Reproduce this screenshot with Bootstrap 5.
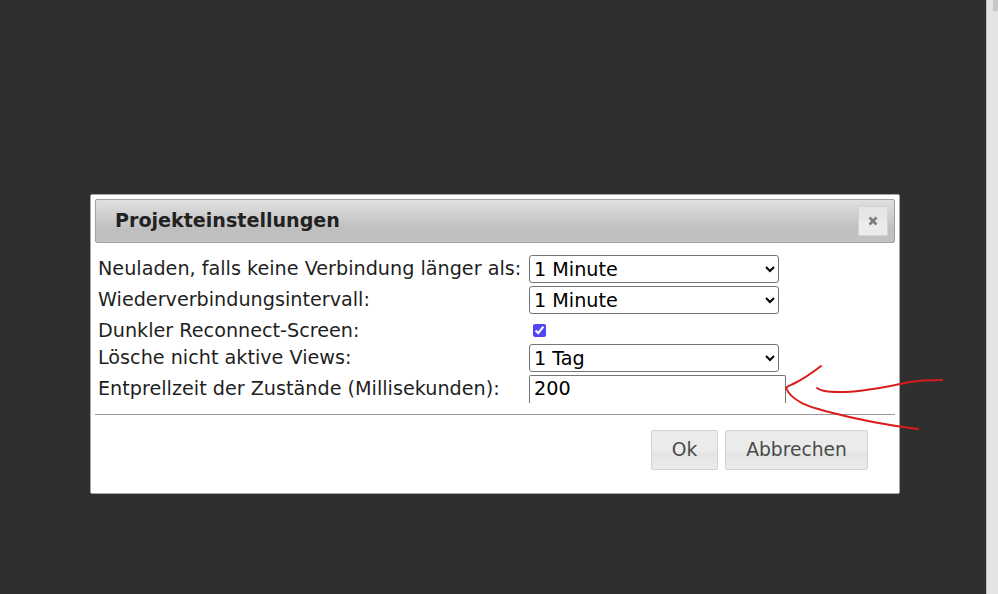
<!DOCTYPE html>
<html lang="de">
<head>
<meta charset="utf-8">
<title>Projekteinstellungen</title>
<link href="https://cdn.jsdelivr.net/npm/bootstrap@5.3.0/dist/css/bootstrap.min.css" rel="stylesheet">
<style>
html, body { height: 100%; margin: 0; overflow: hidden; background: #2f2f2f; }
body { font-family: "DejaVu Sans", sans-serif; font-size: 19.2px; color: #222; }
.stage { height: 594px; }
.backdrop { width: 986px; background: #2f2f2f; padding: 194px 0 0 90px; }
.sbar { width: 12px; background: #e3e3e3; border-left: 1px solid #bdbdbd; padding-left: 6px; }
.sthumb { height: 11px; background: #c8c8c8; }
.dlg { width: 810px; height: 300px; background: #fff; border: 1px solid #a6a6a6; padding: 4px; border-radius: 2px; }
.dlg-title { width: 800px; height: 44px; border: 1px solid #a0a0a0; border-radius: 2px; background: linear-gradient(#e0e0e0, #bfbfbf 70%, #c2c2c2); padding: 7px 6px 7px 19px; }
.dlg-title h1 { font-size: 19.1px; font-weight: 700; margin: 0; color: #222; font-family: "DejaVu Sans", sans-serif; }
.xbtn { width: 30px; height: 30px; border: 1px solid #d3d3d3; background: linear-gradient(#e6e6e6 50%, #ececec 50%); padding: 0; }
.fields { padding: 12px 0 0 3px; height: 171px; }
.frow { height: 31px; }
.frow-check { height: 27px; }
.frow-last { height: 28px; }
.flabel { width: 431px; flex: none; line-height: 27px; white-space: nowrap; color: #1f1f1f; }
.fsel { width: 250px; height: 28px; font-size: 19.2px; padding: 0; background: #fff; color: #000; border: 1px solid #767676; border-radius: 3px; font-family: "DejaVu Sans", sans-serif; }
.fcheck { width: 13px; height: 13px; margin: 0 0 0 4px; accent-color: #4f46f5; }
.finput { width: 257px; height: 28px; border: 1px solid #767676; border-bottom: 0; border-radius: 2px 2px 0 0; font-size: 19.2px; color: #000; padding: 1px 4px; font-family: "DejaVu Sans", sans-serif; outline: 0; background: #fff; }
.rule { border-top: 1px solid #9a9a9a; width: 800px; }
.foot { width: 773px; padding-top: 15px; gap: 7px; }
.dbtn { height: 40px; border: 1px solid #d3d3d3; border-radius: 2px; background: linear-gradient(#ebebeb 50%, #e4e4e4 60%, #ececec); color: #4a4a4a; font-size: 18.7px; padding: 0; font-family: "DejaVu Sans", sans-serif; }
.btn-ok { width: 67px; }
.btn-cancel { width: 143px; }
.ink { position: absolute; left: 0; top: 0; width: 998px; height: 594px; pointer-events: none; }
</style>
</head>
<body>
<div class="stage d-flex">
  <div class="backdrop">
    <div class="dlg">
      <div class="dlg-title d-flex justify-content-between align-items-center">
        <h1>Projekteinstellungen</h1>
        <button class="xbtn d-flex align-items-center justify-content-center" type="button" aria-label="Schließen">
          <svg width="10" height="10" viewBox="0 0 10 10"><path d="M1.5 1.5 8.5 8.5M8.5 1.5 1.5 8.5" stroke="#7d7d7d" stroke-width="2.6" fill="none"/></svg>
        </button>
      </div>
      <div class="fields">
        <div class="frow d-flex align-items-start"><span class="flabel">Neuladen, falls keine Verbindung länger als:</span><select class="fsel"><option>1 Minute</option></select></div>
        <div class="frow d-flex align-items-start"><span class="flabel">Wiederverbindungsintervall:</span><select class="fsel"><option>1 Minute</option></select></div>
        <div class="frow-check d-flex align-items-center"><span class="flabel">Dunkler Reconnect-Screen:</span><input class="fcheck" type="checkbox" checked></div>
        <div class="frow d-flex align-items-start"><span class="flabel">Lösche nicht aktive Views:</span><select class="fsel"><option>1 Tag</option></select></div>
        <div class="frow-last d-flex align-items-start"><span class="flabel">Entprellzeit der Zustände (Millisekunden):</span><input class="finput" type="text" value="200"></div>
      </div>
      <div class="rule"></div>
      <div class="foot d-flex justify-content-end">
        <button class="dbtn btn-ok" type="button">Ok</button>
        <button class="dbtn btn-cancel" type="button">Abbrechen</button>
      </div>
    </div>
  </div>
  <div class="sbar"><div class="sthumb"></div></div>
</div>
<svg class="ink" viewBox="0 0 998 594" fill="none" stroke="#d91c1c" stroke-width="2" stroke-linecap="round">
  <path d="M821 366C812 373 803 379 795 383C791 385 788 386 786 388C788 393 793 398 800 402C806 406 815 408 825 411C855 419 885 425 918 429"/>
  <path d="M817 388C822 392 832 392 845 392C870 391 890 386 910 382C922 380 932 380 942 380"/>
</svg>
<script src="https://cdn.jsdelivr.net/npm/bootstrap@5.3.0/dist/js/bootstrap.bundle.min.js"></script>
</body>
</html>
